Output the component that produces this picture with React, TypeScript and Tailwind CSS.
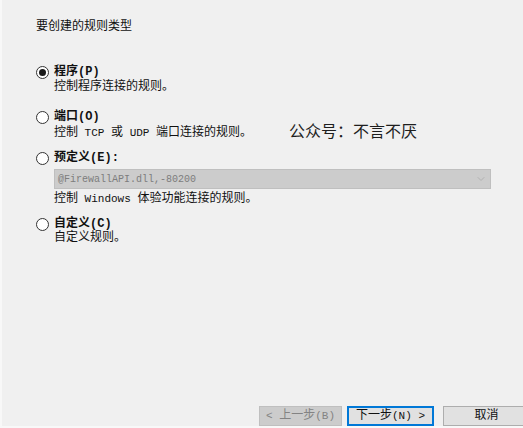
import { ChevronDown } from 'lucide-react'

const cjk = "font-['Liberation_Mono','Noto_Sans_CJK_SC',monospace]"

// SimSun-like half-width latin
function L({ children }: { children: string }) {
  return <span className="font-['Liberation_Mono',monospace] text-[11px] whitespace-pre">{children}</span>
}

function Radio({ checked }: { checked?: boolean }) {
  return (
    <span className="w-[13px] h-[13px] rounded-full border border-[#333] bg-white flex items-center justify-center shrink-0">
      {checked && <span className="w-[7px] h-[7px] rounded-full bg-[#1a1a1a]" />}
    </span>
  )
}

function Option({
  checked,
  label,
  hotkey,
  colon,
  className,
}: {
  checked?: boolean
  label: string
  hotkey: string
  colon?: boolean
  className?: string
}) {
  return (
    <div className={`flex items-center gap-[5px] h-[15px] ${className ?? ''}`}>
      <Radio checked={checked} />
      <span className="font-bold text-[#111]">
        {label}
        <span className="font-['Liberation_Mono',monospace] text-[12px]">({hotkey})</span>
        {colon && <span className="font-['Liberation_Mono',monospace] text-[12px]">:</span>}
      </span>
    </div>
  )
}

export default function App() {
  return (
    <div
      className={`relative w-[523px] h-[428px] overflow-hidden bg-[#f0f0f0] border-l-2 border-b-2 border-[#f8f8f8] text-[12px] leading-[15px] text-[#111] flex flex-col ${cjk}`}
    >
      <div className="pl-[34px] pt-[20px]">
        <div>要创建的规则类型</div>

        <Option checked label="程序" hotkey="P" className="mt-[30px]" />
        <div className="pl-[18px]">控制程序连接的规则。</div>

        <Option label="端口" hotkey="O" className="mt-[15px]" />
        <div className="pl-[18px] mt-[1px]">
          控制<L> TCP </L>或<L> UDP </L>端口连接的规则。
        </div>

        <Option label="预定义" hotkey="E" colon className="mt-[10px]" />
        <div className="ml-[18px] mt-[3px] w-[437px] h-[20px] bg-[#cccccc] border border-[#bfbfbf] flex items-center justify-between pl-[3px] pr-[3px]">
          <span className="font-['Liberation_Mono',monospace] text-[10px] text-[#7d7d7d]">@FirewallAPI.dll,-80200</span>
          <ChevronDown className="w-[12px] h-[12px] text-[#a8a8a8]" strokeWidth={1.5} />
        </div>
        <div className="pl-[18px] mt-[3px]">
          控制<L> Windows </L>体验功能连接的规则。
        </div>

        <Option label="自定义" hotkey="C" className="mt-[10px]" />
        <div className="pl-[18px] -mt-[1px]">自定义规则。</div>
      </div>

      <div className="absolute left-[287px] top-[119px] text-[16px] leading-[22px] text-[#1e1e1e] font-['Noto_Sans_CJK_SC',sans-serif]">
        公众号：不言不厌
      </div>

      <div className="mt-auto pl-[257px] flex gap-[5px] h-[20px]">
        <button className="w-[83px] shrink-0 h-[20px] bg-[#cccccc] border border-[#bfbfbf] text-[#838383] flex items-center justify-center">
          <L>{'< '}</L>上一步<L>(B)</L>
        </button>
        <button className="w-[87px] shrink-0 h-[20px] bg-[#e1e1e1] border-2 border-[#0078d7] text-[#111] flex items-center justify-center">
          下一步<L>{'(N) >'}</L>
        </button>
        <button className="ml-[4px] w-[87px] shrink-0 h-[20px] bg-[#e1e1e1] border border-[#adadad] text-[#111] flex items-center justify-center">
          取消
        </button>
      </div>
    </div>
  )
}
